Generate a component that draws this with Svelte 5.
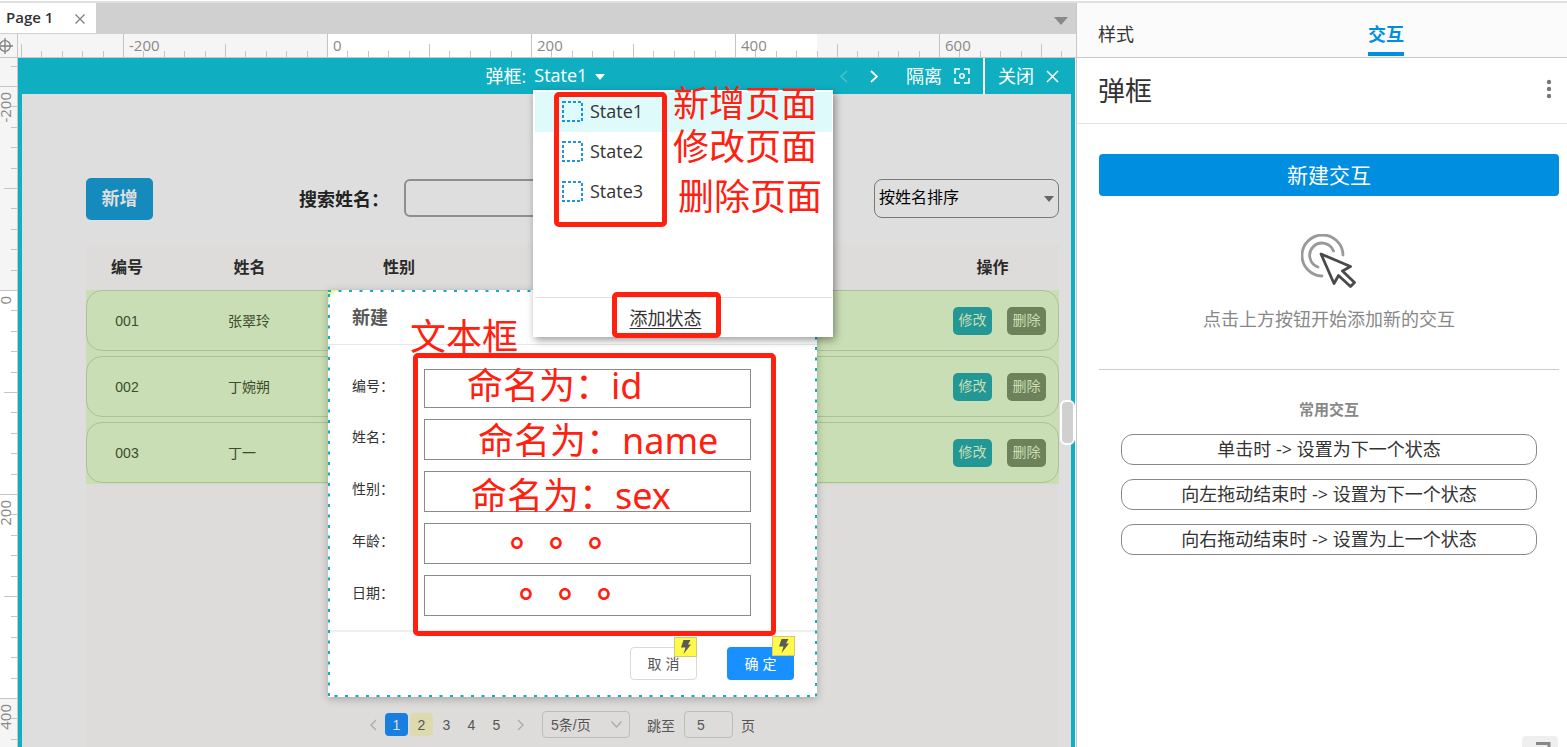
<script lang="ts">
  interface Tick {
    pos: number;
    kind: 'major' | 'mid' | 'minor';
    label: number;
  }

  // Ruler scale: 20 canvas units are 20.4 screen pixels
  function makeTicks(origin: number, from: number, to: number): Tick[] {
    const ticks: Tick[] = [];
    for (let i = from; i <= to; i++) {
      const kind = i % 10 === 0 ? 'major' : i % 5 === 0 ? 'mid' : 'minor';
      ticks.push({ pos: Math.round(origin + i * 20.4), kind, label: i * 20 });
    }
    return ticks;
  }

  const hTicks = makeTicks(310, -15, 36);
  const vTicks = makeTicks(233, -11, 22);
  const hStart = { major: 0, mid: 10, minor: 17 };
  const vStart = { major: 0, mid: 4, minor: 11 };

  const people = [
    { id: '001', name: '张翠玲' },
    { id: '002', name: '丁婉朔' },
    { id: '003', name: '丁一' },
  ];

  const fields = [
    { key: 'id', label: '编号：' },
    { key: 'name', label: '姓名：' },
    { key: 'sex', label: '性别：' },
    { key: 'age', label: '年龄：' },
    { key: 'date', label: '日期：' },
  ];

  const common = [
    '单击时 -> 设置为下一个状态',
    '向左拖动结束时 -> 设置为下一个状态',
    '向右拖动结束时 -> 设置为上一个状态',
  ];

  const states = ['State1', 'State2', 'State3'];
  let current = $state('State1');

  // Free-placed annotations on the canvas
  const frames = [
    { x: 536, y: 34, w: 113, h: 135 },
    { x: 594, y: 234, w: 109, h: 46 },
    { x: 395, y: 295, w: 363, h: 283 },
  ];
  const notes = [
    { x: 655, y: 20, text: '新增页面' },
    { x: 655, y: 63, text: '修改页面' },
    { x: 660, y: 113, text: '删除页面' },
    { x: 392, y: 253, text: '文本框' },
    { x: 449, y: 302, text: '命名为：id' },
    { x: 460, y: 357, text: '命名为：name' },
    { x: 453, y: 412, text: '命名为：sex' },
  ];
  const dots = [
    { x: 492, y: 457 },
    { x: 501, y: 508 },
  ];
</script>

{#snippet bolt()}
  <span class="bolt">
    <svg width="10" height="14" viewBox="0 0 10 14"><path d="M2.500 0H9.500L7 4.500H10L2.500 14 4.500 7.500H0z" fill="#5a5a5a" /></svg>
  </span>
{/snippet}

<div class="app">
  <div class="topline"></div>
  <div class="shell">
    <main class="workspace">
      <div class="tabbar">
        <div class="tab">
          <span>Page 1</span>
          <button class="bare" aria-label="Close page">
            <svg width="10" height="10" viewBox="0 0 10 10"><path d="M0.500 0.500l9 9M9.500 0.500l-9 9" stroke="#808080" stroke-width="1.300" /></svg>
          </button>
        </div>
        <svg width="14" height="8" viewBox="0 0 14 8"><path d="M0 0h14L7 8z" fill="#888" /></svg>
      </div>

      <div class="ruler-row">
        <div class="corner">
          <svg width="16" height="16" viewBox="0 0 16 16" fill="none" stroke="#808080" stroke-width="1.300">
            <circle cx="5" cy="8" r="5.300" /><path d="M5 0v16M-2 8h15" />
          </svg>
        </div>
        <svg class="h-ruler" width="100%" height="23">
          <rect x="310" width="489" height="23" fill="#fff" />
          {#each hTicks as t}
            <rect x={t.pos - 1} y={hStart[t.kind]} width="1" height="23" fill="#c4c4c4" />
            {#if t.kind === 'major'}
              <text x={t.pos + 5} y="17">{t.label}</text>
            {/if}
          {/each}
        </svg>
      </div>

      <div class="canvas-row">
        <svg class="v-ruler" width="17" height="100%">
          <rect y="232" width="17" height="408" fill="#fff" />
          {#each vTicks as t}
            <rect x={vStart[t.kind]} y={t.pos - 1} width="17" height="1" fill="#c4c4c4" />
            {#if t.kind === 'major'}
              <text transform="translate(11 {t.pos + 5}) rotate(-90)" text-anchor="end">{t.label}</text>
            {/if}
          {/each}
        </svg>

        <div class="canvas">
          <header class="state-bar">
            <span></span>
            <div class="state-title">
              <span>弹框:</span>
              <button class="state-pick">
                {current}
                <svg width="10" height="6" viewBox="0 0 10 6"><path d="M0 0h10L5 6z" fill="#fff" /></svg>
              </button>
            </div>
            <div class="state-tools">
              <button class="bare dim" aria-label="Previous state">
                <svg width="8" height="13" viewBox="0 0 8 13"><path d="M7 1L1 6.500 7 12" fill="none" stroke="#fff" stroke-width="1.500" /></svg>
              </button>
              <button class="bare next" aria-label="Next state">
                <svg width="8" height="13" viewBox="0 0 8 13"><path d="M1 1l6 5.500L1 12" fill="none" stroke="#fff" stroke-width="1.700" /></svg>
              </button>
              <button class="bare isolate">
                隔离
                <svg width="16" height="16" viewBox="0 0 16 16" fill="none" stroke="#fff" stroke-width="1.500">
                  <path d="M1 6V1h5M10 1h5v5M15 10v5h-5M6 15H1v-5" /><circle cx="8" cy="8" r="2.200" />
                </svg>
              </button>
              <button class="bare close">
                关闭
                <svg width="13" height="13" viewBox="0 0 13 13"><path d="M1 1l11 11M12 1L1 12" stroke="#fff" stroke-width="1.500" /></svg>
              </button>
            </div>
          </header>

          <div class="page">
            <div class="toolbar">
              <button class="add">新增</button>
              <label for="search">搜索姓名：</label>
              <input id="search" type="text" />
              <div class="sort">
                <select aria-label="排序"><option>按姓名排序</option></select>
                <svg width="10" height="6" viewBox="0 0 10 6"><path d="M0 0h10L5 6z" fill="#666" /></svg>
              </div>
            </div>

            <div class="panel">
              <table>
                <thead>
                  <tr><th>编号</th><th>姓名</th><th>性别</th><th></th><th class="ops">操作</th></tr>
                </thead>
                <tbody>
                  {#each people as p}
                    <tr>
                      <td>{p.id}</td>
                      <td class="name">{p.name}</td>
                      <td></td>
                      <td></td>
                      <td class="actions">
                        <button class="edit">修改</button>
                        <button class="remove">删除</button>
                      </td>
                    </tr>
                  {/each}
                </tbody>
              </table>

              <nav class="pager">
                <button class="bare arrow" aria-label="上一页">
                  <svg width="7" height="12" viewBox="0 0 7 12"><path d="M6 1L1 6l5 5" fill="none" stroke="#aaa" stroke-width="1.300" /></svg>
                </button>
                {#each [1, 2, 3, 4, 5] as n}
                  <button class="num" class:active={n === 1} class:hover={n === 2}>{n}</button>
                {/each}
                <button class="bare arrow" aria-label="下一页">
                  <svg width="7" height="12" viewBox="0 0 7 12"><path d="M1 1l5 5-5 5" fill="none" stroke="#aaa" stroke-width="1.300" /></svg>
                </button>
                <div class="size">
                  <select aria-label="每页条数"><option>5条/页</option></select>
                  <svg width="11" height="7" viewBox="0 0 11 7"><path d="M0.500 0.500l5 5.500 5-5.500" fill="none" stroke="#aaa" stroke-width="1.300" /></svg>
                </div>
                <label for="jump">跳至</label>
                <input id="jump" type="text" value="5" />
                <span>页</span>
              </nav>
            </div>
          </div>

          <section class="dialog">
            <h2>新建</h2>
            <form>
              {#each fields as f}
                <label for={f.key}>{f.label}</label>
                <input id={f.key} type="text" />
              {/each}
            </form>
            <footer>
              <button class="cancel">取 消{@render bolt()}</button>
              <button class="ok">确 定{@render bolt()}</button>
            </footer>
            <svg class="outline" width="100%" height="100%">
              <rect x="0" y="0" width="100%" height="100%" fill="none" stroke="#0fafc1" stroke-width="4" stroke-dasharray="3 7.500" />
            </svg>
          </section>

          <div class="state-menu">
            <ul>
              {#each states as s}
                <li>
                  <button class:selected={s === current} onclick={() => (current = s)}>
                    <svg width="21" height="21" viewBox="0 0 21 21"><rect x="1" y="1" width="19" height="19" fill="none" stroke="#1a94dc" stroke-width="2" stroke-dasharray="3 2" /></svg>
                    {s}
                  </button>
                </li>
              {/each}
            </ul>
            <button class="add-state">添加状态</button>
          </div>

          {#each frames as f}
            <div class="frame" style="left: {f.x}px; top: {f.y}px; width: {f.w}px; height: {f.h}px"></div>
          {/each}
          {#each notes as n}
            <div class="note" style="left: {n.x}px; top: {n.y}px">{n.text}</div>
          {/each}
          {#each dots as d}
            <div class="note dots" style="left: {d.x}px; top: {d.y}px"><span>。</span><span>。</span><span>。</span></div>
          {/each}

          <div class="handle"></div>
        </div>
      </div>
    </main>

    <aside class="inspector">
      <nav class="inspector-tabs">
        <button class="bare">样式</button>
        <button class="bare on">交互</button>
      </nav>
      <div class="target">
        <h1>弹框</h1>
        <button class="bare" aria-label="More">
          <svg width="6" height="20" viewBox="0 0 6 20" fill="#777"><circle cx="3" cy="3" r="2.200" /><circle cx="3" cy="10" r="2.200" /><circle cx="3" cy="17" r="2.200" /></svg>
        </button>
      </div>
      <div class="inspector-body">
        <button class="new-action">新建交互</button>
        <div class="empty">
          <svg width="56" height="56" viewBox="0 0 56 56" fill="none" stroke-width="2.800" stroke-linecap="round" stroke-linejoin="round">
            <path d="M42 21A20.500 20.500 0 1 0 21 42" stroke="#999" />
            <path d="M32.500 17A12.300 12.300 0 1 0 17 33" stroke="#999" />
            <path d="M20 20L49.500 32.500 41.500 37 53.500 48.500 49.500 52.500 37.500 41.500 33 49.500z" fill="#fff" stroke="#4a4a4a" />
          </svg>
          <p>点击上方按钮开始添加新的交互</p>
        </div>
        <div class="common">
          <h3>常用交互</h3>
          {#each common as c}
            <button>{c}</button>
          {/each}
        </div>
      </div>
      <button class="corner-tab" aria-label="Expand">
        <svg width="15" height="12" viewBox="0 0 15 12"><path d="M0 1.500h13V12" fill="none" stroke="#888" stroke-width="3" /></svg>
      </button>
    </aside>
  </div>
</div>

<style>
  :global(body) { margin: 0; }

  .app {
    height: 100vh; overflow: hidden;
    display: flex; flex-direction: column;
    font-family: "Open Sans", "Noto Sans CJK SC", sans-serif;
    font-size: 18px; color: #333; background: #fff;
  }
  .app :global(*) { box-sizing: border-box; }
  svg { flex-shrink: 0; }
  button, input, select { font: inherit; color: inherit; margin: 0; padding: 0; }
  button { line-height: 1; white-space: nowrap; }
  .bare { border: 0; background: none; display: flex; align-items: center; }

  .topline { height: 3px; flex-shrink: 0; border-bottom: 2px solid #e0e0e0; }
  .shell { flex: 1; min-height: 0; display: flex; }
  .workspace { flex: 1; min-width: 0; display: flex; flex-direction: column; }

  /* Page tabs */
  .tabbar {
    height: 31px; background: #d0d0d0; padding: 4px 8px 0 0;
    display: flex; align-items: center; justify-content: space-between;
  }
  .tab {
    width: 96px; height: 30px; align-self: flex-start; margin-top: -4px; background: #fff; padding: 0 11px 3px 6px;
    display: flex; align-items: center; justify-content: space-between;
    font-size: 15px; font-weight: 600;
  }
  .tab button { padding-top: 4px; }

  /* Rulers */
  .ruler-row { height: 24px; display: flex; border-bottom: 1px solid #c8c8c8; }
  .corner { width: 18px; background: #f5f5f5; border-right: 1px solid #c8c8c8; display: flex; align-items: center; overflow: hidden; }
  .h-ruler { flex: 1; min-width: 0; background: #f5f5f5; }
  .h-ruler text, .v-ruler text { font-size: 15px; fill: #888; }
  .canvas-row { flex: 1; min-height: 0; display: flex; }
  .v-ruler { background: #f5f5f5; }

  /* Canvas */
  .canvas {
    flex: 1; min-width: 0; position: relative; overflow: hidden;
    display: flex; flex-direction: column;
    margin-right: 1px; border-left: 1px solid #c8c8c8; background: #0fafc1;
  }
  .state-bar {
    height: 36px; flex-shrink: 0; color: #fff;
    display: grid; grid-template-columns: 1fr auto 1fr; align-items: center;
  }
  .state-title { display: flex; align-items: center; gap: 8px; padding-right: 2px; }
  .state-title span { padding-bottom: 2px; }
  .state-pick {
    height: 31px; border: 0; border-bottom: 1px solid #fff; background: none;
    display: flex; align-items: center; gap: 8px; padding-bottom: 1px;
  }
  .state-pick svg { margin-top: 3px; }
  .state-tools { display: flex; justify-content: flex-end; align-items: center; align-self: stretch; }
  .state-tools button { height: 36px; }
  .dim { opacity: 0.25; }
  .next { margin: 0 28px 0 22px; }
  .isolate { gap: 12px; padding-right: 13px; }
  .close { gap: 12px; padding: 0 16px 0 13px; border-left: 2px solid #fff; }

  .page {
    flex: 1; min-height: 0; margin: 0 4px; padding: 84px 12px 0 64px; background: #dedede;
    display: flex; flex-direction: column;
    font-family: "Liberation Sans", "Noto Sans CJK SC", sans-serif; font-size: 14px;
  }
  .toolbar { display: flex; align-items: center; color: #222; }
  .add {
    width: 67px; height: 42px; border: 0; border-radius: 5px;
    background: #148abd; color: #dedede; font-size: 18px; font-weight: 700;
  }
  .toolbar label { margin: 0 15px 0 146px; padding-bottom: 2px; font-size: 18px; font-weight: 700; }
  .toolbar input { width: 220px; height: 38px; margin-bottom: 2px; border: 2px solid #8e8e8e; border-radius: 6px; background: transparent; }
  .sort { position: relative; width: 185px; margin: 0 0 2px auto; }
  .sort select, .size select { appearance: none; width: 100%; background: transparent; }
  .sort select { display: block; height: 39px; border: 1px solid #777; border-radius: 8px; padding: 0 4px 2px; font-size: 16px; color: #000; }
  .sort svg, .size svg { position: absolute; right: 5px; top: 50%; margin-top: -2px; pointer-events: none; }

  .panel { flex: 1; min-height: 0; margin-top: 25px; background: #dedcda; display: flex; flex-direction: column; }
  table, thead { display: block; }
  tr { display: grid; grid-template-columns: 82px 163px 136px 1fr 117px; align-items: center; }
  thead tr { height: 45px; padding-bottom: 3px; }
  th { padding: 0; font-size: 16px; font-weight: 700; color: #2a2a2a; }
  th.ops { padding-right: 16px; }
  tbody { display: grid; gap: 5px; background: #c9deb4; padding-bottom: 1px; }
  tbody tr { height: 61px; border: 1px solid #abc296; border-radius: 16px; }
  td { padding: 0; text-align: center; color: #3c4b2c; }
  td:first-child { padding-right: 2px; }
  td.name { text-align: left; padding: 0 0 2px 59px; }
  .actions { display: flex; justify-content: center; gap: 15px; }
  .actions button { width: 39px; height: 28px; border: 0; border-radius: 5px; padding-bottom: 2px; font-size: 14px; color: #c9deb4; }
  .actions .edit { background: #239795; }
  .actions .remove { background: #6d825a; }

  .pager { margin-top: auto; padding: 0 0 9px 284px; display: flex; align-items: center; gap: 2px; color: #555; }
  .num { width: 23px; height: 23px; border: 0; border-radius: 4px; background: none; }
  .num.active { background: #187fe0; color: #dedede; }
  .num.hover { background: #dedab0; }
  .arrow { padding: 0 6px 0 0; }
  .arrow + .size { margin-left: 10px; }
  .num + .arrow { padding-left: 7px; }
  .size { position: relative; width: 88px; }
  .size select, .pager input { height: 27px; border: 1px solid #bcbcbc; border-radius: 4px; padding: 0 8px; }
  .size select { display: block; }
  .size svg { right: 8px; margin-top: -4px; }
  .pager label { margin: 0 7px 0 15px; }
  .pager input { width: 49px; padding: 0 12px; background: transparent; margin-right: 6px; }

  /* Dialog being edited */
  .dialog {
    position: absolute; left: 310px; top: 232px; width: 489px; height: 407px;
    display: flex; flex-direction: column;
    background: radial-gradient(circle at 12px 12px, #fff 11px, #e6f695 12px) 0 0 / 12px 12px no-repeat #fff;
    box-shadow: 0 2px 8px rgba(0, 0, 0, 0.25);
    font-family: "Liberation Sans", "Noto Sans CJK SC", sans-serif; font-size: 14px;
  }
  .dialog h2 { margin: 0; height: 55px; padding-left: 24px; border-bottom: 1px solid #e8e8e8; font-size: 18px; line-height: 56px; color: #585858; }
  form {
    flex: 1; padding: 24px 66px 0 24px;
    display: grid; grid-template-columns: 72px 1fr; grid-template-rows: 39px repeat(4, 41px);
    row-gap: 11px; align-items: center; align-content: start;
  }
  form label { padding-bottom: 7px; }
  form input { width: 100%; height: 100%; border: 1px solid #8a8a8a; background: #fff; }
  .dialog footer {
    height: 67px; padding: 15px 23px 0; border-top: 2px solid #efefef;
    display: flex; justify-content: flex-end; align-items: flex-start; gap: 30px;
  }
  .dialog footer button { position: relative; width: 67px; height: 33px; border-radius: 4px; }
  .cancel { border: 1px solid #d9d9d9; background: #fff; color: #555; }
  .ok { border: 0; background: #1890ff; color: #fff; }
  .bolt {
    position: absolute; right: -1px; top: -11px; width: 23px; height: 20px;
    display: flex; align-items: center; justify-content: center;
    background: #fff94a; border: 1px solid #cfca80;
  }
  .outline { position: absolute; inset: 0; pointer-events: none; }

  /* State drop-down */
  .state-menu {
    position: absolute; left: 515px; top: 32px; width: 300px; height: 247px; padding: 2px 1px 0 2px;
    display: flex; flex-direction: column; background: #fff; box-shadow: 2px 3px 8px rgba(0, 0, 0, 0.4);
  }
  .state-menu ul { flex: 1; margin: 0; padding: 0; list-style: none; }
  .state-menu li button {
    width: 100%; height: 40px; border: 0; background: none; padding: 0 0 2px 27px;
    display: flex; align-items: center; gap: 7px;
  }
  .state-menu li .selected { background: #dffafa; }
  .add-state { height: 40px; border: 0; border-top: 1px solid #e2e2e2; background: none; padding: 0 36px 0 0; text-align: center; text-decoration: underline; text-underline-offset: 3px; }

  /* Annotations */
  .frame { position: absolute; border: 5px solid #ff2010; border-radius: 5px; pointer-events: none; }
  .note {
    position: absolute; color: #ff2010; white-space: nowrap; pointer-events: none;
    font-family: "Noto Sans", "Noto Sans CJK SC", sans-serif; font-size: 36px; line-height: 52px;
  }
  .dots { display: flex; gap: 3px; font-weight: 700; line-height: 36px; }

  .handle {
    position: absolute; right: 0; top: 342px; width: 15px; height: 45px;
    background: #d0d0d0; border: 2px solid #fff; border-radius: 6px;
  }

  /* Inspector */
  .inspector {
    position: relative; width: 491px; flex-shrink: 0; border-left: 1px solid #c8c8c8;
    display: flex; flex-direction: column;
  }
  .inspector-tabs { height: 55px; padding: 0 21px; display: flex; gap: 234px; background: #fbfbfb; border-bottom: 1px solid #c8c8c8; }
  .inspector-tabs button { height: 53px; padding-top: 12px; border-bottom: 4px solid transparent; }
  .inspector-tabs .on { color: #008fe0; border-color: #008fe0; font-weight: 700; }
  .target { height: 66px; padding: 0 15px 3px 21px; display: flex; align-items: center; justify-content: space-between; border-bottom: 1px solid #e2e2e2; }
  .target h1 { margin: 0; font-size: 27px; font-weight: 400; }
  .inspector-body { padding: 30px 8px 0 22px; display: flex; flex-direction: column; }
  .new-action { height: 42px; border: 0; border-radius: 4px; background: #008fe0; color: #fff; font-size: 21px; }
  .empty { height: 174px; padding-top: 38px; text-align: center; color: #888; border-bottom: 1px solid #ccc; }
  .empty svg { display: block; margin: 0 auto; }
  .empty p { margin: 16px 0 0; line-height: 26px; }
  .common { padding: 28px 22px 0; display: flex; flex-direction: column; gap: 14px; }
  .common h3 { margin: 0; font-size: 15px; line-height: 22px; text-align: center; color: #888; }
  .common button { height: 31px; border: 1px solid #888; border-radius: 12px; padding-bottom: 2px; background: #fff; }
  .corner-tab {
    position: absolute; right: 9px; bottom: -20px; width: 36px; height: 31px; border: 0; border-radius: 4px;
    background: #efefef; padding: 6px 0 0 14px; display: flex; align-items: flex-start;
  }
</style>
